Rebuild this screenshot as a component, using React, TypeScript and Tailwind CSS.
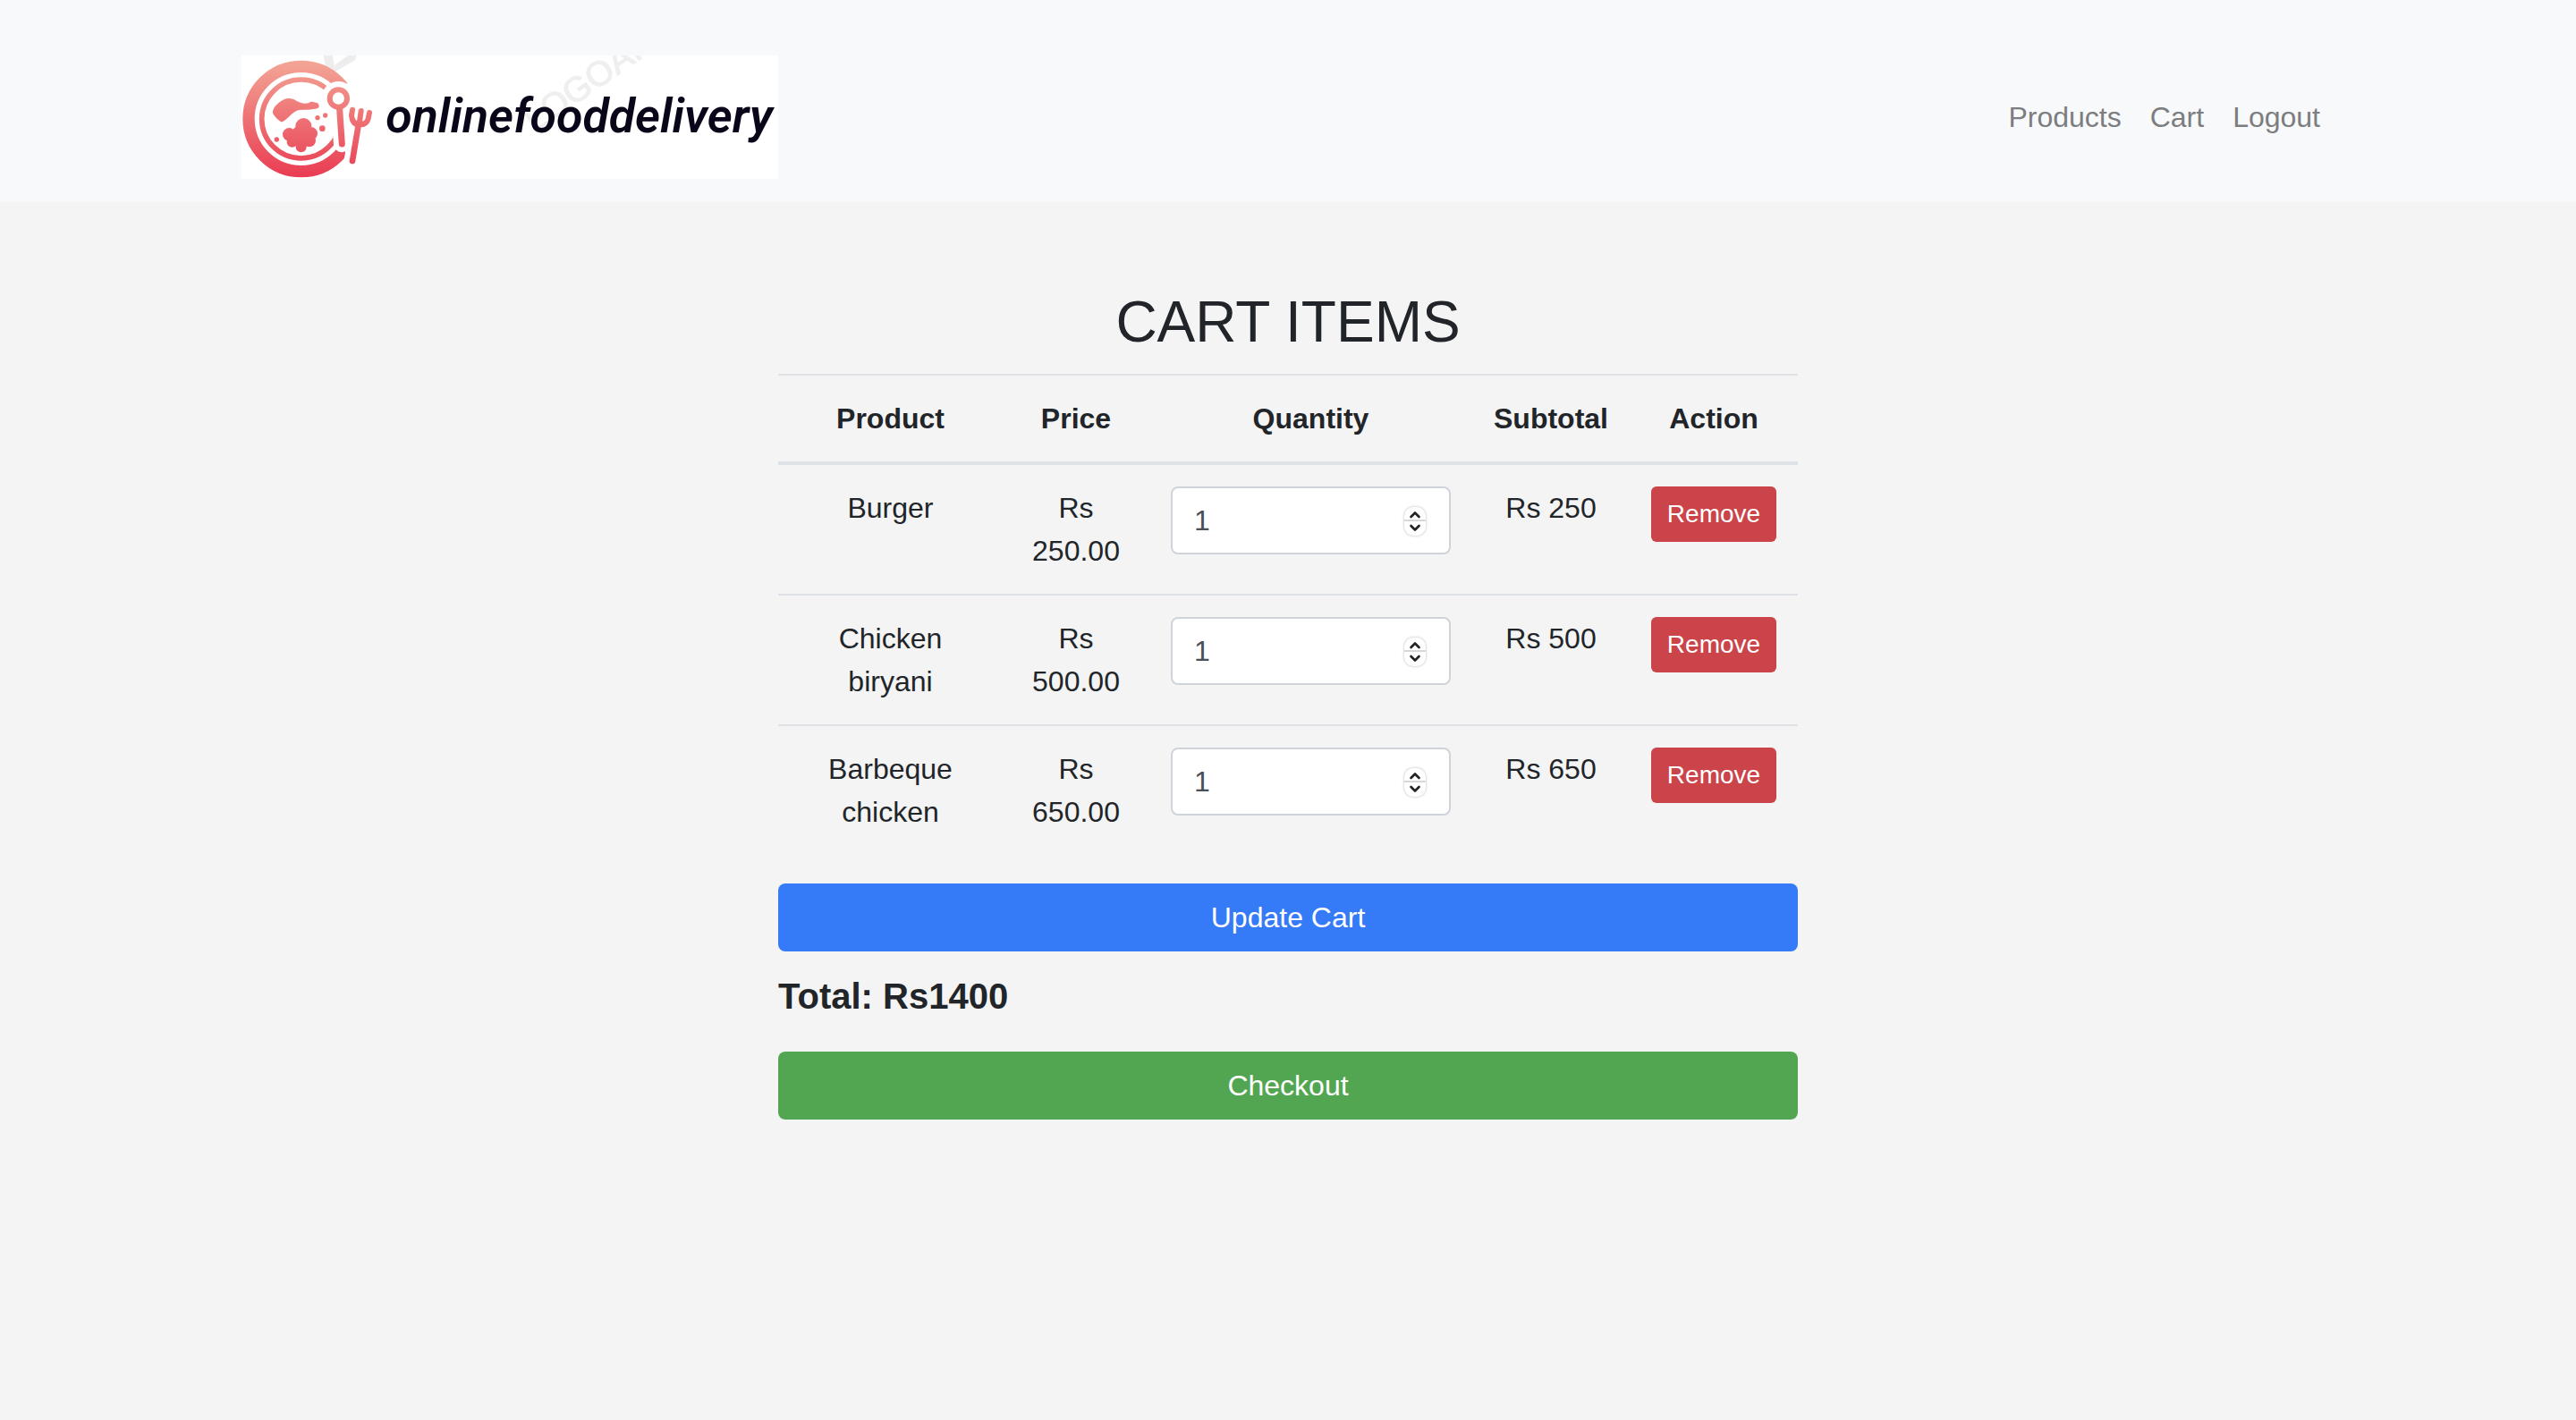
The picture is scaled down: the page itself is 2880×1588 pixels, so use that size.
import { useState } from "react";

type Item = { id: string; name: string; price: number };

const items: Item[] = [
  { id: "burger", name: "Burger", price: 250 },
  { id: "biryani", name: "Chicken biryani", price: 500 },
  { id: "barbeque", name: "Barbeque chicken", price: 650 },
];

function Logo() {
  return (
    <svg
      viewBox="30 36 1800 414"
      className="block w-[600px] h-[138px] bg-white"
      role="img"
      aria-label="onlinefooddelivery"
    >
      <defs>
        <linearGradient id="plate" gradientUnits="userSpaceOnUse" x1="0" y1="53" x2="0" y2="445">
          <stop offset="0" stopColor="#f3a696" />
          <stop offset="1" stopColor="#e93c52" />
        </linearGradient>
      </defs>
      <path d="M305 36h30l10 54-14-7-20-14z M345 90l-2-22 44-32h28q-1 12-8 18z" fill="#ededed" />
      <text
        transform="translate(1013 297) rotate(-35)"
        fontFamily='"Liberation Sans", sans-serif'
        fontSize="117"
        fill="#efefef"
        stroke="#efefef"
        strokeWidth="3"
      >
        LOGOAI
      </text>
      <circle cx="230" cy="249" r="156" fill="#fff" />
      <g fill="none" stroke="url(#plate)">
        <circle cx="230" cy="249" r="176" strokeWidth="40" />
        <circle cx="230" cy="249" r="132" strokeWidth="17" />
      </g>
      <path d="M383 130L372 190L378 362L374 384L420 420H480V130Z" fill="#fff" />
      <circle cx="355" cy="180" r="57" fill="#fff" />
      <path d="M358 215L367 333" stroke="#fff" strokeWidth="56" strokeLinecap="round" />
      <g fill="url(#plate)">
        <path d="M136 220C140 205 160 190 172 184C186 177 202 180 214 188C228 196 242 199 254 196C260 190 270 190 277 194C286 194 291 200 290 207C289 214 282 216 274 215C258 219 238 217 224 219C206 222 194 238 180 250C172 256 168 260 161 258C150 250 138 238 135 229C134 226 135 223 136 220Z" />
        <circle cx="238" cy="273" r="27" />
        <circle cx="190" cy="301" r="22" />
        <circle cx="263" cy="298" r="22" />
        <circle cx="200" cy="326" r="18" />
        <circle cx="257" cy="321" r="22" />
        <circle cx="230" cy="343" r="18" />
        <circle cx="229" cy="306" r="34" />
        <circle cx="285" cy="245" r="8" />
        <circle cx="311" cy="237" r="8" />
        <circle cx="301" cy="281" r="10" />
        <circle cx="148" cy="318" r="8" />
        <path d="M393 236Q392 276 424 277Q456 278 464 246Q446 264 427 262Q408 260 393 236Z" />
      </g>
      <g fill="none" stroke="url(#plate)" strokeLinecap="round">
        <circle cx="355" cy="180" r="29" strokeWidth="18" />
        <path d="M359 216L367 333" strokeWidth="21" />
        <path d="M422 270L402 390" strokeWidth="20" />
        <path
          d="M402 218L399 238Q402 266 425 268Q450 268 455 248L459 228M431 222L425 265"
          strokeWidth="18"
        />
      </g>
      <text
        x="514"
        y="293"
        fontFamily='Roboto, "Liberation Sans", sans-serif'
        fontStyle="italic"
        fontWeight="600"
        fontSize="161"
        fill="#0a0518"
      >
        onlinefooddelivery
      </text>
    </svg>
  );
}

function StepButton({ label, up, onClick }: { label: string; up?: boolean; onClick: () => void }) {
  return (
    <button type="button" aria-label={label} onClick={onClick} className="flex h-4 w-6 items-center justify-center">
      <svg viewBox="0 0 24 16" className="h-4 w-6" fill="none" stroke="#222" strokeWidth="2.6" strokeLinecap="round" strokeLinejoin="round">
        <path d={up ? "M7.5 12L12 7.5L16.5 12" : "M7.5 5L12 9.5L16.5 5"} />
      </svg>
    </button>
  );
}

function QuantityField({ name }: { name: string }) {
  const [value, setValue] = useState(1);
  return (
    <div className="relative">
      <input
        type="number"
        min={1}
        aria-label={`Quantity of ${name}`}
        value={value}
        onChange={(e) => setValue(Number(e.target.value))}
        className="block h-[76px] w-full rounded-lg border-2 border-[#ced4da] bg-white px-6 text-[32px] leading-[48px] text-[#495057] [appearance:textfield] [&::-webkit-inner-spin-button]:appearance-none"
      />
      <div className="absolute inset-y-0 right-7 flex items-center pt-0.5">
        <div className="flex flex-col divide-y-2 divide-[#d8d8d8] rounded-[10px] bg-white shadow-[0_0_3px_0_#b4b4b4]">
          <StepButton up label={`Increase ${name}`} onClick={() => setValue(value + 1)} />
          <StepButton label={`Decrease ${name}`} onClick={() => setValue(Math.max(1, value - 1))} />
        </div>
      </div>
    </div>
  );
}

export default function App() {
  const total = items.reduce((sum, item) => sum + item.price, 0);
  return (
    <div className="min-h-screen bg-[#f4f4f4] font-['Liberation_Sans',Arial,sans-serif] text-[32px] leading-[48px] text-[#212529]">
      <header className="bg-[#f8f9fb] pt-[62px] pb-[26px]">
        <nav className="mx-auto flex max-w-[2340px] items-center justify-between">
          <a href="#home">
            <Logo />
          </a>
          <ul className="flex text-[#7c7d7e]">
            <li><a href="#products" className="px-4">Products</a></li>
            <li><a href="#cart" className="px-4">Cart</a></li>
            <li><a href="#logout" className="px-4">Logout</a></li>
          </ul>
        </nav>
      </header>

      <main className="mx-auto max-w-[1140px] pt-24">
        <h1 className="mb-5 text-center text-[64px] leading-[76px]">CART ITEMS</h1>
        <table className="w-full table-fixed border-separate border-spacing-0 text-center">
          <thead>
            <tr className="[&>th]:border-t-2 [&>th]:border-b-4 [&>th]:border-[#dee2e6] [&>th]:py-6">
              <th scope="col" className="w-[251px]">Product</th>
              <th scope="col" className="w-[164px]">Price</th>
              <th scope="col" className="w-[361px]">Quantity</th>
              <th scope="col" className="w-[176px]">Subtotal</th>
              <th scope="col" className="w-[188px]">Action</th>
            </tr>
          </thead>
          <tbody>
            {items.map((item) => (
              <tr
                key={item.id}
                className="[&>td]:border-[#dee2e6] [&>td]:p-6 [&>td]:align-top [&:not(:first-child)>td]:border-t-2"
              >
                <td>{item.name}</td>
                <td>Rs {item.price.toFixed(2)}</td>
                <td><QuantityField name={item.name} /></td>
                <td>Rs {item.price}</td>
                <td>
                  <button
                    type="button"
                    className="block h-[62px] w-full rounded-md bg-[#cb444a] text-[28px] leading-[42px] text-white"
                  >
                    Remove
                  </button>
                </td>
              </tr>
            ))}
          </tbody>
        </table>
        <button type="button" className="mt-8 block h-[76px] w-full rounded-lg bg-[#357af6] text-white">
          Update Cart
        </button>
        <p className="mt-[26px] mb-[38px] text-[40px] leading-[48px] font-bold">Total: Rs{total}</p>
        <button type="button" className="block h-[76px] w-full rounded-lg bg-[#53a651] text-white">
          Checkout
        </button>
      </main>
    </div>
  );
}
